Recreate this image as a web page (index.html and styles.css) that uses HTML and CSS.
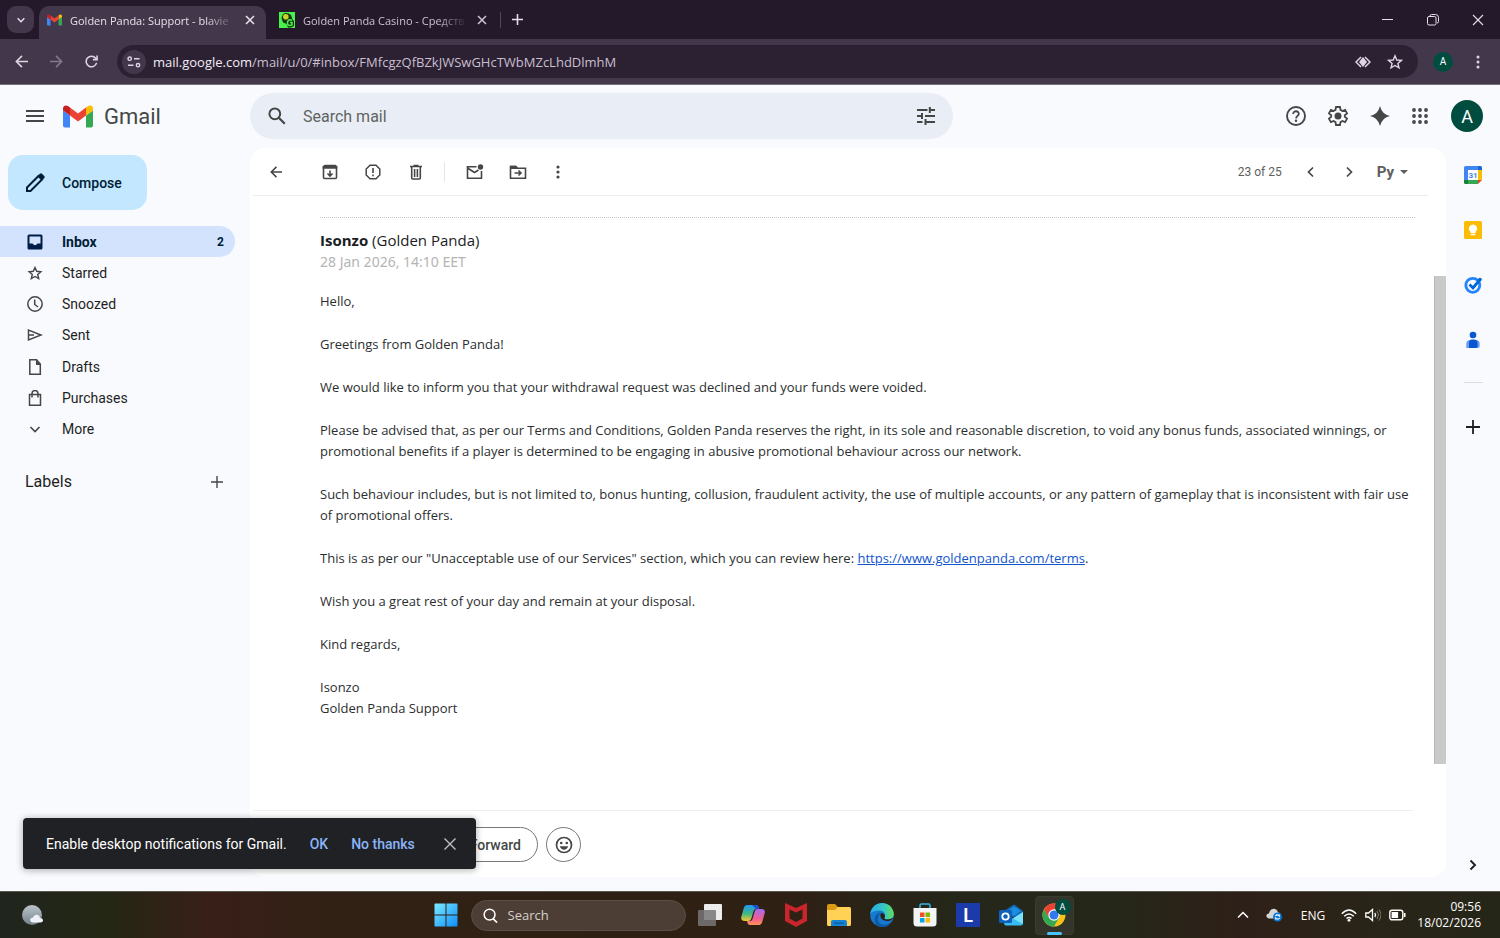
FILE: index.html
```html
<!DOCTYPE html>
<html lang="en">
<head>
<meta charset="utf-8">
<title>Golden Panda: Support</title>
<link rel="stylesheet" href="styles.css">
</head>
<body>
<div class="tabstrip">
  <button class="tab-search" aria-label="Search tabs"><svg viewBox="0 0 12 12" width="10" height="10"><path class="ln" d="M2 4l4 4 4-4" stroke-width="1.8"/></svg></button>
  <div class="tab active">
    <svg class="favicon" viewBox="0 0 30 22" width="15" height="12"><use href="#gm"/></svg>
    <span class="tab-title">Golden Panda: Support - blavie</span>
    <button class="plain" aria-label="Close tab"><svg viewBox="0 0 10 10" width="10" height="10"><path class="ln" d="M1 1l8 8M9 1l-8 8" stroke-width="1.6"/></svg></button>
  </div>
  <div class="tab">
    <svg class="favicon" viewBox="0 0 16 16" width="16" height="16"><path fill="#4af04e" d="M0 0h16v16H0z"/><path fill="#17350d" d="M4 2q4-2.500 8 1l1.500 4.500L15 9v5l-3 1.500H9L7.500 12 4 10.500 2.500 6z"/><circle cx="6.800" cy="4.800" r="2.800" fill="#c6d527"/><path fill="none" stroke="#4af04e" stroke-width="1.500" d="M13 8.500q-4-2-4.500 2t4.500 2.500v-2.500h-2"/></svg>
    <span class="tab-title">Golden Panda Casino - Средств</span>
    <button class="plain" aria-label="Close tab"><svg viewBox="0 0 10 10" width="10" height="10"><path class="ln" d="M1 1l8 8M9 1l-8 8" stroke-width="1.6"/></svg></button>
  </div>
  <span class="tab-divider"></span>
  <button class="plain new-tab" aria-label="New tab"><svg viewBox="0 0 12 12" width="11" height="11"><path class="ln" d="M6 0v12M0 6h12" stroke-width="1.7"/></svg></button>
  <div class="window-controls">
    <button class="plain" aria-label="Minimize"><svg viewBox="0 0 12 12" width="12" height="12"><path class="ln" d="M0 5.500h11" stroke-width="1"/></svg></button>
    <button class="plain" aria-label="Restore"><svg viewBox="0 0 12 12" width="12" height="12"><rect class="ln" x=".5" y="2.500" width="8.500" height="8.500" rx="1.500"/><path class="ln" d="M3 2q0-1.500 1.500-1.500h4q3 0 3 3v4q0 1.500-1.500 1.500"/></svg></button>
    <button class="plain" aria-label="Close"><svg viewBox="0 0 12 12" width="12" height="12"><path class="ln" d="M1 1l10 10M11 1L1 11" stroke-width="1.1"/></svg></button>
  </div>
</div>

<div class="navbar">
  <button class="plain nav-btn" aria-label="Back"><svg viewBox="0 0 14 14" width="13" height="13"><path class="ln" d="M14 7H2M7.500 1L1.500 7l6 6" stroke-width="1.7"/></svg></button>
  <button class="plain nav-btn dim" aria-label="Forward"><svg viewBox="0 0 14 14" width="13" height="13"><path class="ln" d="M0 7h12M6.500 1l6 6-6 6" stroke-width="1.7"/></svg></button>
  <button class="plain nav-btn" aria-label="Reload"><svg viewBox="0 0 14 14" width="13" height="13"><path class="ln" d="M12.500 8.500A5.700 5.700 0 1 1 11.500 3.500L13 5" stroke-width="1.7"/><path class="ln" d="M13 0.500V5H8.500" stroke-width="1.7"/></svg></button>
  <div class="omnibox">
    <button class="site-info" aria-label="Site information"><svg viewBox="0 0 14 12" width="14" height="12"><circle class="ln" cx="2.700" cy="2.700" r="1.700" stroke-width="1.400"/><circle class="ln" cx="11" cy="9.200" r="1.700" stroke-width="1.400"/><path class="ln" d="M7 2.700h5.500M1 9.200h5.500" stroke-width="1.500"/></svg></button>
    <span class="url"><b>mail.google.com</b>/mail/u/0/#inbox/FMfcgzQfBZkJWSwGHcTWbMZcLhdDlmhM</span>
    <button class="plain box-btn" aria-label="Lens"><svg viewBox="0 0 16 14" width="16" height="14"><path class="ln" d="M6 2L1 7l5 5M10 2l5 5-5 5" stroke-width="1.500"/><path fill="currentColor" d="M8 2l4 5-4 5-4-5z"/></svg></button>
    <button class="plain box-btn" aria-label="Bookmark"><svg viewBox="0 0 16 16" width="16" height="16"><path class="ln" d="M8 1.800l1.800 4.200 4.600.4-3.500 3 1.100 4.500L8 11.500l-4 2.400 1.100-4.500-3.500-3 4.600-.4z" stroke-width="1.400"/></svg></button>
  </div>
  <button class="mini-avatar" aria-label="Profile">A</button>
  <button class="plain menu-btn" aria-label="Menu"><svg viewBox="0 0 4 14" width="4" height="14"><g fill="currentColor"><circle cx="2" cy="2" r="1.500"/><circle cx="2" cy="7" r="1.500"/><circle cx="2" cy="12" r="1.500"/></g></svg></button>
</div>

<main class="app">
  <header class="header">
    <div class="brand">
      <button class="plain" aria-label="Main menu"><svg viewBox="0 0 18 14" width="18" height="14"><path class="ln" d="M0 2h18M0 7h18M0 12h18" stroke-width="1.800"/></svg></button>
      <svg class="logo" viewBox="0 0 30 22" width="30" height="23"><g id="gm"><path fill="#4285f4" d="M2 22h5V10L0 5v15q0 2 2 2z"/><path fill="#34a853" d="M23 22h5q2 0 2-2V5l-7 5z"/><path fill="#fbbc04" d="M23 2v8l7-5V3c0-2.800-3-4-5-2.400z"/><path fill="#ea4335" d="M7 10V2l8 6 8-6v8l-8 6z"/><path fill="#c5221f" d="M0 3v2l7 5V2L5 .6C3-1 0 .2 0 3z"/></g></svg>
      <span class="brand-name">Gmail</span>
    </div>
    <form class="search">
      <button type="button" class="plain" aria-label="Search"><svg viewBox="0 0 18 18" width="18" height="18"><circle class="ln" cx="6.800" cy="6.800" r="5.400" stroke-width="2"/><path class="ln" d="M10.800 10.800l6 6" stroke-width="2.200"/></svg></button>
      <input type="text" placeholder="Search mail" aria-label="Search mail">
      <button type="button" class="plain" aria-label="Search options"><svg viewBox="0 0 18 18" width="18" height="18"><path class="ln" d="M0 3h10.500M12.800 0v6M12.800 3H18M0 9h5M5 6v6M8 9h10M0 15h5.500M8.500 12v6M8.500 15H18" stroke-width="2"/></svg></button>
    </form>
    <div class="header-actions">
      <button class="plain" aria-label="Support"><svg viewBox="0 0 20 20" width="20" height="20"><circle class="ln" cx="10" cy="10" r="9" stroke-width="1.900"/><path class="ln" d="M7.200 8c0-3.800 5.800-3.500 5.600 0-.1 1.900-2.700 2-2.700 4.400" stroke-width="1.800"/><circle cx="10" cy="14.800" r="1.200" fill="currentColor"/></svg></button>
      <button class="plain" aria-label="Settings"><svg viewBox="2 2 20 20" width="20" height="20"><path class="ln" d="M10 3h4l.5 2.900 1.900 1.100 2.700-1.100 2 3.500-2.300 1.800v1.600l2.300 1.800-2 3.500-2.700-1.100-1.900 1.100L14 21h-4l-.5-2.900L7.600 17l-2.700 1.100-2-3.500 2.300-1.800v-1.600L2.900 9.400l2-3.500L7.600 7l1.900-1.100z" stroke-width="1.800"/><circle cx="12" cy="12" r="3.500" fill="currentColor"/></svg></button>
      <button class="plain" aria-label="Gemini"><svg viewBox="0 0 20 20" width="20" height="20"><path fill="currentColor" d="M10 0q1.800 8.200 10 10-8.200 1.800-10 10Q8.200 11.800 0 10q8.200-1.800 10-10z"/></svg></button>
      <button class="plain" aria-label="Google apps"><svg viewBox="0 0 16 16" width="16" height="16"><g fill="currentColor"><circle cx="2" cy="2" r="1.900"/><circle cx="8" cy="2" r="1.900"/><circle cx="14" cy="2" r="1.900"/><circle cx="2" cy="8" r="1.900"/><circle cx="8" cy="8" r="1.900"/><circle cx="14" cy="8" r="1.900"/><circle cx="2" cy="14" r="1.900"/><circle cx="8" cy="14" r="1.900"/><circle cx="14" cy="14" r="1.900"/></g></svg></button>
      <button class="avatar" aria-label="Account">A</button>
    </div>
  </header>

  <div class="columns">
    <aside class="sidebar">
      <button class="compose"><svg viewBox="0 0 20 20" width="20" height="20"><path class="ln" d="M2 18v-3.500L13.500 3l3.500 3.500L5.500 18z" stroke-width="2"/><path fill="currentColor" d="M12.500 3L15 .8q1-1 2 0L19.200 3q1 1 0 2L17 7.500z"/></svg>Compose</button>
      <nav class="folders">
        <a href="#inbox" class="folder current"><svg viewBox="0 0 16 16" width="16" height="16"><path fill="currentColor" fill-rule="evenodd" d="M2 .5h12q1.500 0 1.500 1.500v12q0 1.500-1.500 1.500H2Q.5 15.500.5 14V2Q.5.500 2 .5zM2.500 2.500v7h3q2.500 3.500 5 0h3v-7z"/></svg><span>Inbox</span><span class="count">2</span></a>
        <a href="#starred" class="folder"><svg viewBox="0 0 16 16" width="16" height="16"><path class="ln" d="M8 2.500l1.700 3.800 4.200.4-3.200 2.800 1 4.100L8 11.500l-3.700 2.100 1-4.100L2.100 6.700l4.200-.4z" stroke-width="1.400"/></svg><span>Starred</span></a>
        <a href="#snoozed" class="folder"><svg viewBox="0 0 16 16" width="16" height="16"><circle class="ln" cx="8" cy="8" r="7.200" stroke-width="1.500"/><path class="ln" d="M7.700 3.500v5l3.300 2.500" stroke-width="1.500"/></svg><span>Snoozed</span></a>
        <a href="#sent" class="folder"><svg viewBox="0 0 16 16" width="16" height="16"><path class="ln" d="M1.500 3v10L14 8zM1.500 8H7" stroke-width="1.500"/></svg><span>Sent</span></a>
        <a href="#drafts" class="folder"><svg viewBox="0 0 16 16" width="16" height="16"><path class="ln" d="M2.800.8h6.700L13.300 5v10.200H2.800z" stroke-width="1.500"/><path fill="currentColor" d="M9 .8V6h4.800z"/></svg><span>Drafts</span></a>
        <a href="#purchases" class="folder"><svg viewBox="0 0 16 16" width="16" height="16"><path class="ln" d="M2.500 4.500h11v10.700h-11zM5 7.500V3.500q0-3 3-3t3 3v4" stroke-width="1.500"/></svg><span>Purchases</span></a>
        <a href="#more" class="folder"><svg viewBox="0 0 16 16" width="16" height="16"><path class="ln" d="M3.500 6L8 10.500 12.500 6" stroke-width="1.600"/></svg><span>More</span></a>
      </nav>
      <div class="labels"><h2>Labels</h2><button class="plain" aria-label="Create label"><svg viewBox="0 0 12 12" width="12" height="12"><path class="ln" d="M6 0v12M0 6h12" stroke-width="1.400"/></svg></button></div>
    </aside>

    <section class="card">
      <div class="mail-tools">
        <button class="plain tool" aria-label="Back to inbox"><svg viewBox="0 0 14 14" width="12" height="12"><path class="ln" d="M14 7H2M7.500 1L1.500 7l6 6" stroke-width="1.800"/></svg></button>
        <div class="tool-group">
          <button class="plain tool" aria-label="Archive"><svg viewBox="0 0 16 16" width="16" height="16"><path class="ln" d="M1.500 2.500v11q0 1 1 1h11q1 0 1-1v-11zM8 6.500V12M5.500 9.500L8 12l2.500-2.500" stroke-width="1.600"/><path fill="currentColor" d="M2.500.8h11l1.800 2v2H.7v-2z"/></svg></button>
          <button class="plain tool" aria-label="Report spam"><svg viewBox="0 0 16 16" width="16" height="16"><path class="ln" d="M5 1.200h6L14.800 5v6L11 14.800H5L1.200 11V5z" stroke-width="1.500"/><path class="ln" d="M8 4v5M8 10.500v1.800" stroke-width="1.600"/></svg></button>
          <button class="plain tool" aria-label="Delete"><svg viewBox="0 0 14 16" width="14" height="16"><path class="ln" d="M1 2.500h12M4.500 1.500h5M2.700 3v11q0 1 1 1h6.600q1 0 1-1V3M5.600 5v8M8.400 5v8" stroke-width="1.600"/></svg></button>
        </div>
        <span class="tool-divider"></span>
        <div class="tool-group">
          <button class="plain tool" aria-label="Mark as unread"><svg viewBox="0 0 18 16" width="18" height="16"><path class="ln" d="M10.500 2.700H1.500v11.500h14V7M1.500 4l7 4.500 4-2.500" stroke-width="1.600"/><circle cx="14.500" cy="3" r="2.700" fill="currentColor"/></svg></button>
          <button class="plain tool" aria-label="Move to"><svg viewBox="0 0 18 16" width="18" height="16"><path class="ln" d="M1.500 3.500v10.700h15v-10H8.500L7 2.500H1.500zM5.500 9h6M9.500 6.500L12 9l-2.500 2.500" stroke-width="1.600"/><path fill="currentColor" d="M1 1.800h6L8.500 4v1H1z"/></svg></button>
          <button class="plain tool more" aria-label="More"><svg viewBox="0 0 4 14" width="4" height="14"><g fill="currentColor"><circle cx="2" cy="2" r="1.600"/><circle cx="2" cy="7" r="1.600"/><circle cx="2" cy="12" r="1.600"/></g></svg></button>
        </div>
        <span class="position">23 of 25</span>
        <button class="plain pager" aria-label="Newer"><svg viewBox="0 0 12 12" width="12" height="12"><path class="ln" d="M8 1.500L3.500 6 8 10.500" stroke-width="1.700"/></svg></button>
        <button class="plain pager" aria-label="Older"><svg viewBox="0 0 12 12" width="12" height="12"><path class="ln" d="M4 1.500L8.500 6 4 10.500" stroke-width="1.700"/></svg></button>
        <button class="plain lang">Ру<svg viewBox="0 0 8 4" width="8" height="4"><path fill="currentColor" d="M0 0h8L4 4z"/></svg></button>
      </div>

      <div class="scroll-area">
        <article class="message">
          <h3><b>Isonzo</b> (Golden Panda)</h3>
          <time>28 Jan 2026, 14:10 EET</time>
          <p>Hello,</p>
          <p>Greetings from Golden Panda!</p>
          <p>We would like to inform you that your withdrawal request was declined and your funds were voided.</p>
          <p>Please be advised that, as per our Terms and Conditions, Golden Panda reserves the right, in its sole and reasonable discretion, to void any bonus funds, associated winnings, or promotional benefits if a player is determined to be engaging in abusive promotional behaviour across our network.</p>
          <p>Such behaviour includes, but is not limited to, bonus hunting, collusion, fraudulent activity, the use of multiple accounts, or any pattern of gameplay that is inconsistent with fair use of promotional offers.</p>
          <p>This is as per our "Unacceptable use of our Services" section, which you can review here: <a href="#terms">https://www.goldenpanda.com/terms</a>.</p>
          <p>Wish you a great rest of your day and remain at your disposal.</p>
          <p>Kind regards,</p>
          <p>Isonzo<br>Golden Panda Support</p>
        </article>
        <div class="scrollbar"><div class="thumb"></div></div>
      </div>

      <div class="reply-row">
        <button class="pill" aria-label="Reply"></button>
        <button class="pill forward">Forward</button>
        <button class="emoji" aria-label="Add reaction"><svg viewBox="0 0 18 18" width="18" height="18"><circle class="ln" cx="9" cy="9" r="7.500" stroke-width="1.700"/><circle cx="6.200" cy="7" r="1.300" fill="currentColor"/><circle cx="11.800" cy="7" r="1.300" fill="currentColor"/><path fill="currentColor" d="M4.800 10.300h8.400q-1.200 3.400-4.200 3.400t-4.200-3.400z"/></svg></button>
      </div>
    </section>

    <aside class="side-panel">
      <button class="plain" aria-label="Calendar"><svg viewBox="0 0 18 18" width="18" height="18"><path fill="#4285f4" d="M1.500 0H14v4H4v10H0V1.500Q0 0 1.500 0z"/><path fill="#1967d2" d="M14 0h2.500Q18 0 18 1.500V4h-4z"/><path fill="#fbbc04" d="M14 4h4v10h-4z"/><path fill="#188038" d="M0 14h4v4H1.500Q0 18 0 16.500z"/><path fill="#34a853" d="M4 14h10v4H4z"/><path fill="#ea4335" d="M14 14h4l-4 4z"/><path fill="#fff" d="M4 4h10v10H4z"/><text x="9" y="12" text-anchor="middle" class="cal-num">31</text></svg></button>
      <button class="plain" aria-label="Keep"><svg viewBox="0 0 18 18" width="18" height="18"><rect width="18" height="18" rx="1.500" fill="#fbbc04"/><path fill="#fff" d="M9 3.500a4 4 0 0 1 2.500 7.200V12h-5v-1.300A4 4 0 0 1 9 3.500zM6.700 12.800h4.600v1.500H6.700z"/></svg></button>
      <button class="plain" aria-label="Tasks"><svg viewBox="0 0 18 18" width="18" height="18"><circle cx="8.800" cy="9.300" r="7" fill="none" stroke="#2684fc" stroke-width="2.800"/><path fill="none" stroke="#0066da" stroke-width="2.800" d="M5.500 8.500L9 12l7-8.500"/><circle cx="16" cy="3.500" r="1.800" fill="#0066da"/></svg></button>
      <button class="plain" aria-label="Contacts"><svg viewBox="0 0 18 18" width="18" height="18"><circle cx="9" cy="4" r="3.300" fill="#0b57d0"/><path fill="#6c9bf5" d="M2.300 17v-4q0-4 4-4h5.400q4 0 4 4v2q0 2-2 2z"/><path fill="#0b57d0" d="M5 17v-5q0-3.500 3-3.500h2q3.500 0 3.500 3.500v3.500q0 1.500-2 1.500z"/></svg></button>
      <span class="panel-divider"></span>
      <button class="plain" aria-label="Get add-ons"><svg viewBox="0 0 14 14" width="14" height="14"><path class="ln" d="M7 0v14M0 7h14" stroke-width="1.800"/></svg></button>
      <button class="plain collapse" aria-label="Hide side panel"><svg viewBox="0 0 12 12" width="12" height="12"><path class="ln" d="M3.500 1.500L8 6l-4.500 4.500" stroke-width="1.900"/></svg></button>
    </aside>
  </div>

  <div class="toast" role="alert">
    <span>Enable desktop notifications for Gmail.</span>
    <button class="plain toast-action">OK</button>
    <button class="plain toast-action">No thanks</button>
    <button class="plain" aria-label="Dismiss"><svg viewBox="0 0 12 12" width="12" height="12"><path class="ln" d="M.5.500l11 11M11.500.500l-11 11" stroke-width="1.400"/></svg></button>
  </div>
</main>

<footer class="taskbar">
  <button class="plain weather" aria-label="Weather"><svg viewBox="0 0 24 22" width="24" height="22"><defs><linearGradient id="moon" x2="0" y2="1"><stop stop-color="#bcc5cb"/><stop offset="1" stop-color="#74818b"/></linearGradient></defs><circle cx="11" cy="11" r="10" fill="url(#moon)"/><path fill="#eef2f7" d="M12 18.500c-4-.5-3.500-5 0-5 1.500-4 6.500-3.500 7 .5 4 0 4 4.500.5 4.500z"/></svg></button>
  <div class="dock">
    <button class="plain app-btn" aria-label="Start"><svg viewBox="0 0 24 24" width="24" height="24"><defs><linearGradient id="win" x2="1" y2="1"><stop stop-color="#7cebff"/><stop offset="1" stop-color="#0b8dfb"/></linearGradient></defs><path fill="url(#win)" d="M1.500.5h10v11H.5v-10q0-1 1-1zM12.500.5h10q1 0 1 1v10h-11zM.5 12.500h11v11h-10q-1 0-1-1zM12.500 12.500h11v10q0 1-1 1h-10z"/></svg></button>
    <label class="task-search"><svg viewBox="0 0 16 16" width="15" height="15"><circle class="ln" cx="7" cy="7" r="5.800" stroke-width="1.600"/><path class="ln" d="M11 11.500l4 4" stroke-width="1.800"/></svg><input type="text" placeholder="Search" aria-label="Search"></label>
    <button class="plain app-btn" aria-label="Task view"><svg viewBox="0 0 24 22" width="24" height="22"><rect x="6" width="18" height="16" rx="1" fill="#ececec"/><rect y="6" width="18" height="16" rx="1" fill="#777" opacity=".85"/></svg></button>
    <button class="plain app-btn" aria-label="Copilot"><svg viewBox="0 0 24 22" width="24" height="22"><defs><linearGradient id="cpa" x2="0" y2="1"><stop stop-color="#2196f3"/><stop offset=".55" stop-color="#41b883"/><stop offset="1" stop-color="#ffc82c"/></linearGradient><linearGradient id="cpb" x2="0" y2="1"><stop stop-color="#a66bf0"/><stop offset=".6" stop-color="#ee5d93"/><stop offset="1" stop-color="#ff9251"/></linearGradient></defs><path fill="url(#cpa)" d="M6 1h9q2 0 2.500 2L18 5h-3q-2 0-2.500 2l-2 7q-.8 3-3.500 3H4q-5 0-3.500-5l2-7Q3.500 1 6 1z"/><path fill="#1b4fd0" d="M11 1h4q2 0 2.500 2L18 5h-3z"/><path fill="url(#cpb)" d="M18 21H9q-2 0-2.500-2L6 17h3q2 0 2.500-2l2-7Q14 5 17 5h3q5 0 3.500 5l-2 7q-1 4-3.500 4z"/></svg></button>
    <button class="plain app-btn" aria-label="McAfee"><svg viewBox="0 0 22 24" width="22" height="24"><path fill="#c8252c" d="M0 0l11 5L22 0v18l-11 6-11-6zM4.500 6.500v9L11 19l6.500-3.500v-9L11 9.500z" fill-rule="evenodd"/></svg></button>
    <button class="plain app-btn" aria-label="File Explorer"><svg viewBox="0 0 24 22" width="24" height="22"><path fill="#d99a15" d="M0 2Q0 0 2 0h6l3 3v5H0z"/><path fill="#ffd154" d="M0 6h8l3-3h11.500Q24 3 24 4.500v16q0 1.500-1.500 1.500h-21Q0 22 0 20.500z"/><path fill="#1583d3" d="M4 22v-4q0-2 2-2h12q2 0 2 2v4z"/><path fill="#0d5fa5" d="M7 18.500h10v1.500H7z"/></svg></button>
    <button class="plain app-btn" aria-label="Edge"><svg viewBox="0 0 24 24" width="24" height="24"><defs><linearGradient id="eg"><stop stop-color="#2aa9e6"/><stop offset=".6" stop-color="#35c9c5"/><stop offset="1" stop-color="#65dc50"/></linearGradient></defs><circle cx="12" cy="12" r="11.800" fill="#1877cf"/><path fill="url(#eg)" d="M.3 11C2-3.500 22-3.500 23.800 10.500c.3 5-4.500 6.500-8.300 5.500-1.500-.5-1.200-1.500-.6-2.300C16 11 14 8 10.500 7.500 6.500 7 2 8.500.3 11z"/><path fill="#0c59a4" d="M9 12c-4 9 5 13 12 7-7 12-20 3-15.500-6Q7 10 10.500 9.500 9.500 10.500 9 12z"/><path fill="#29220f" d="M15 13.500q-1.500 2 .5 2.700 4 1 7.500-1.500-1 3-5 3.300c-6 .3-9-4-7-8q3.500 0 4 3.500z"/></svg></button>
    <button class="plain app-btn" aria-label="Store"><svg viewBox="0 0 24 24" width="24" height="24"><path fill="none" stroke="#35b2e5" stroke-width="1.600" d="M7 6V2.500Q7 1 8.500 1h7Q17 1 17 2.500V6"/><path fill="#f4f4f4" d="M.5 5h23v15q0 3.500-3.500 3.500H4Q.5 23.500.5 20z"/><path fill="#f25022" d="M7 9.500h4.500V14H7z"/><path fill="#7fba00" d="M12.500 9.500H17V14h-4.500z"/><path fill="#00a4ef" d="M7 15h4.500v4.500H7z"/><path fill="#ffb900" d="M12.500 15H17v4.500h-4.500z"/></svg></button>
    <button class="plain app-btn" aria-label="Lenovo"><span class="l-tile">L</span></button>
    <button class="plain app-btn" aria-label="Outlook"><svg viewBox="0 0 24 22" width="24" height="22"><path fill="#1066b5" d="M5 7l9-6q1-.7 2 0l8 6v4L5 15z"/><path fill="#1b8ee0" d="M8 7l7-4.500L22 7l-7 5z"/><path fill="#38bdf2" d="M24 8v11q0 2.500-2.500 2.500H7q-2 0-2-2z"/><path fill="#79e1fa" d="M24 8v12L14 14.500z"/><rect y="6" width="13" height="13" rx="1.500" fill="#0d61bd"/><circle cx="6.500" cy="12.500" r="3.200" fill="none" stroke="#fff" stroke-width="1.800"/></svg></button>
    <button class="plain app-btn running" aria-label="Chrome"><svg viewBox="0 0 24 24" width="24" height="24"><circle cx="12" cy="12" r="11.500" fill="#fbc116"/><path fill="#ea4335" d="M2 6.300A11.500 11.500 0 0 1 22 6.300H12v5.700l-5 3z"/><path fill="#34a853" d="M2 6.300A11.500 11.500 0 0 0 12 23.500l5-8.700-5-2.800-5 3z"/><circle cx="12" cy="12" r="5.700" fill="#fff"/><circle cx="12" cy="12" r="4.500" fill="#3179ee"/></svg><span class="badge">A</span></button>
  </div>
  <div class="tray">
    <button class="plain" aria-label="Show hidden icons"><svg viewBox="0 0 12 12" width="12" height="12"><path class="ln" d="M1 8.500l5-5 5 5" stroke-width="1.500"/></svg></button>
    <button class="plain cloud" aria-label="OneDrive"><svg viewBox="0 0 16 14" width="16" height="14"><path fill="#d5d5d5" d="M3 10.500C-.5 10-.5 5.500 3 5.500 4-.5 11-.5 12 4.500c3.500 0 4 5 1 6z"/><circle cx="11.500" cy="9" r="4.500" fill="#0a78d6"/><path fill="none" stroke="#fff" stroke-width="1.100" d="M9.300 8q2-2.300 4 0V6.500M13.700 10q-2 2.300-4 0v1.500"/></svg></button>
    <span class="lang-code">ENG</span>
    <button class="plain quick" aria-label="Network, sound, battery">
      <svg viewBox="0 0 16 13" width="16" height="13"><path class="ln" d="M.8 4.800q7.200-7.500 14.400 0M3.200 7.300q4.800-4.800 9.600 0M5.500 9.600q2.500-2.300 5 0" stroke-width="1.400"/><circle cx="8" cy="11.300" r="1.400" fill="currentColor"/></svg>
      <svg viewBox="0 0 16 14" width="16" height="14"><path class="ln" d="M.8 5v4h2.700L7.500 12.500v-11L3.500 5zM9.800 5q1.500 2 0 4" stroke-width="1.300"/><path class="ln" opacity=".4" d="M12 3q3 4 0 8M14 1.500q4 5.500 0 11"/></svg>
      <svg viewBox="0 0 17 12" width="17" height="12"><rect class="ln" x=".8" y="1.200" width="13" height="9.600" rx="2.200" stroke-width="1.400"/><rect x="2.600" y="3" width="6.500" height="6" fill="currentColor"/><path class="ln" d="M15.700 4v4" stroke-width="1.600"/></svg>
    </button>
    <div class="clock"><span>09:56</span><span>18/02/2026</span></div>
  </div>
</footer>
</body>
</html>
```

FILE: styles.css
```css
* { box-sizing: border-box; }

body {
  margin: 0;
  height: 100vh;
  display: flex;
  flex-direction: column;
  overflow: hidden;
  font-family: Roboto, sans-serif;
  font-size: 14px;
  color: #1f1f1f;
}

svg { display: block; flex: none; }
.ln { fill: none; stroke: currentColor; }

button, input { font: inherit; color: inherit; }
.plain {
  border: 0;
  padding: 0;
  background: none;
  display: flex;
  align-items: center;
  justify-content: center;
}

/* Browser tabs */
.tabstrip {
  height: 39px;
  flex: none;
  display: flex;
  align-items: center;
  padding-left: 7px;
  background: #23192b;
  color: #e6dfe9;
  font-family: "Open Sans", sans-serif;
  font-size: 11px;
}
.tab-search {
  width: 27px;
  height: 27px;
  display: flex;
  align-items: center;
  justify-content: center;
  border: 0;
  border-radius: 9px;
  background: #43384b;
  margin-right: 5px;
}
.tab {
  width: 227px;
  height: 33px;
  align-self: flex-end;
  display: flex;
  align-items: center;
  padding: 0 11px 5px 8px;
  color: #cbc1d0;
}
.tab + .tab { padding: 0 6px 5px 13px; }
.tab.active {
  background: #43384b;
  border-radius: 10px 10px 0 0;
  color: #e6dfe9;
}
.favicon { margin-right: 8px; }
.tab-title {
  flex: 1;
  white-space: nowrap;
  margin-right: 10px;
  mask-image: linear-gradient(90deg, #000 82%, transparent);
}
.tab-divider { width: 1px; height: 16px; background: #51465a; margin: 0 11px 0 7px; }
.window-controls { margin-left: auto; display: flex; gap: 33px; padding-right: 16px; }

/* Address row */
.navbar {
  height: 46px;
  flex: none;
  display: flex;
  align-items: center;
  padding: 0 20px 0 15px;
  background: #43384b;
  border-bottom: 1px solid #77707d;
  color: #dfd3e4;
}
.nav-btn { width: 13px; margin-right: 22px; }
.dim { color: #85798d; }
.omnibox {
  flex: 1;
  height: 33px;
  display: flex;
  align-items: center;
  padding: 0 15px 0 5px;
  border-radius: 17px;
  background: #2b2133;
  margin-right: 15px;
  margin-left: -3px;
}
.site-info {
  width: 24px;
  height: 24px;
  padding: 0;
  border: 0;
  border-radius: 12px;
  background: #43384b;
  display: flex;
  align-items: center;
  justify-content: center;
  margin-right: 7px;
}
.url { flex: 1; font-family: "Open Sans", sans-serif; font-size: 13px; color: #c9bfce; }
.url b { font-weight: 400; color: #f2ecf5; }
.box-btn { margin-left: 16px; }
.mini-avatar, .avatar {
  border: 0;
  padding: 0;
  border-radius: 50%;
  background: #004d40;
  color: #fff;
}
.mini-avatar { width: 20px; height: 20px; font-size: 10px; }
.menu-btn { margin-left: 23px; }

/* Mail application */
.app {
  flex: 1;
  min-height: 0;
  display: flex;
  flex-direction: column;
  position: relative;
  background: #f8fafd;
}
.header {
  height: 63px;
  flex: none;
  display: flex;
  align-items: center;
  padding: 0 17px 1px 0;
  color: #444746;
}
.brand { width: 250px; display: flex; align-items: center; padding-left: 26px; }
.logo { margin: 0 11px 0 19px; }
.brand-name { font-size: 22px; }
.search {
  width: 703px;
  height: 46px;
  display: flex;
  align-items: center;
  gap: 17px;
  padding: 0 18px;
  border-radius: 23px;
  background: #e9eef6;
}
.search input {
  flex: 1;
  border: 0;
  padding: 0;
  background: none;
  font-size: 16px;
  outline: 0;
}
.search input::placeholder { color: #5f6362; }
.header-actions { margin-left: auto; display: flex; align-items: center; gap: 22px; }
.header-actions .avatar { margin-left: 1px; }
.avatar { width: 32px; height: 32px; font-size: 18px; }

.columns { flex: 1; min-height: 0; display: flex; padding-bottom: 14px; }

.sidebar { width: 250px; padding: 7px 15px 0 0; }
.compose {
  width: 139px;
  height: 55px;
  display: flex;
  align-items: center;
  gap: 17px;
  margin-left: 8px;
  padding: 0 0 0 17px;
  border: 0;
  border-radius: 15px;
  background: #c2e7ff;
  color: #001d35;
  font-weight: 500;
}
.folders { height: 219px; margin-top: 16px; display: grid; grid-auto-rows: 1fr; }
.folder {
  display: flex;
  align-items: center;
  gap: 19px;
  padding: 0 11px 0 27px;
  border-radius: 0 16px 16px 0;
  color: #1f1f1f;
  text-decoration: none;
}
.folder svg { color: #444746; }
.folder.current { background: #d3e3fd; color: #001d35; font-weight: 700; }
.folder.current svg { color: #001d49; }
.count { margin-left: auto; font-size: 12px; }
.labels { display: flex; align-items: center; justify-content: space-between; margin: 26px 12px 0 25px; color: #444746; }
.labels h2 { margin: 0; font-size: 16px; font-weight: 400; line-height: 22px; color: #1f1f1f; }

.card {
  flex: 1;
  min-width: 0;
  display: flex;
  flex-direction: column;
  overflow: hidden;
  border-radius: 15px;
  background: #fff;
}
.mail-tools {
  height: 48px;
  flex: none;
  display: flex;
  align-items: center;
  margin: 0 18px 0 3px;
  padding: 0 20px 0 11px;
  border-bottom: 1px solid #eceeef;
  color: #444746;
}
.tool { width: 23px; height: 24px; }
.tool-group { display: flex; gap: 20px; margin-left: 31px; }
.tool-divider { width: 1px; height: 20px; background: #e4e6e8; margin: 0 -13px 0 17px; }
.tool.more { margin-left: -3px; }
.position { margin-left: auto; font-size: 12px; color: #5e5e5e; }
.pager { margin-left: 26px; }
.position + .pager { margin-left: 23px; }
.lang { margin-left: 22px; gap: 6px; font-weight: 700; font-size: 15px; color: #5e5e5e; }

.scroll-area { flex: 1; min-height: 0; display: flex; }
.message {
  flex: 1;
  margin: 21px 19px 0 70px;
  border-top: 1px dotted #c5c5c5;
  padding-top: 11px;
  font-family: "Open Sans", sans-serif;
  font-size: 13px;
  color: #2b2e2f;
}
.message h3 { margin: 0; font-size: 15px; font-weight: 400; line-height: 22px; color: #1b1d1e; }
.message time { display: block; margin-bottom: 18px; font-family: "Noto Sans", sans-serif; font-size: 14px; line-height: 22px; color: #b4b4b4; }
.message p { margin: 0 0 22px; line-height: 21px; }
.message a { color: #1155cc; }
.scrollbar { width: 12px; padding-top: 80px; }
.thumb { height: 488px; max-height: 100%; background: #c9c9c9; border-left: 1px solid #b9b9b9; }

.reply-row {
  flex: none;
  display: flex;
  gap: 8px;
  margin: 0 33px 0 3px;
  padding: 16px 0 15px 67px;
  border-top: 1px solid #eceeef;
  color: #444746;
}
.pill, .emoji { height: 35px; padding: 0; border: 1px solid #747775; border-radius: 18px; background: #fff; }
.pill { width: 92px; font-weight: 500; }
.pill.forward { width: 118px; padding-right: 16px; text-align: right; }
.emoji { width: 35px; display: flex; align-items: center; justify-content: center; }

.side-panel {
  width: 54px;
  display: flex;
  flex-direction: column;
  align-items: center;
  gap: 37px;
  padding: 18px 0 6px;
}
.cal-num { font: 700 8px Roboto, sans-serif; fill: #4285f4; }
.panel-divider { width: 19px; height: 1px; margin: -4px 0 0; background: #dadce0; }
.collapse { margin-top: auto; }

.toast {
  position: absolute;
  left: 23px;
  bottom: 22px;
  height: 51px;
  display: flex;
  align-items: center;
  padding: 0 20px 0 23px;
  border-radius: 4px;
  background: #202124;
  color: #fff;
  box-shadow: 0 1px 6px 1px rgba(60, 64, 67, .35);
}
.toast-action { margin-left: 23px; color: #8ab4f8; font-weight: 500; }
.toast-action + .plain:last-child { margin-left: 29px; color: #bdc1c6; }

/* Desktop taskbar */
.taskbar {
  height: 47px;
  flex: none;
  display: grid;
  grid-template-columns: 1fr auto 1fr;
  align-items: center;
  border-top: 1px solid #5c5850;
  background: linear-gradient(90deg, #20251e, #242714 7%, #391f18 14%, #312115 22%, #2f2014 52%, #242719 64%, #252719 74%, #2e2018 83%, #292518 92%, #252618);
  color: #fff;
  font-family: "Open Sans", sans-serif;
}
.weather { margin-left: 21px; justify-self: start; }
.dock { display: flex; align-items: center; }
.app-btn { width: 43px; height: 39px; position: relative; }
.task-search {
  width: 215px;
  height: 31px;
  display: flex;
  align-items: center;
  gap: 10px;
  margin: 0 3px;
  padding: 0 11px;
  border: 1px solid #5c4e45;
  border-radius: 16px;
  background: #4c3e35;
}
.task-search input { width: 100%; padding: 0; border: 0; outline: 0; background: none; font-size: 13px; }
.task-search input::placeholder { color: #d5cfcb; }
.l-tile { width: 24px; height: 24px; background: #1b3bab; font: 700 19px/24px Lato, sans-serif; }
.running::before {
  content: "";
  position: absolute;
  inset: 0 2px;
  border: 1px solid #3b3c30;
  border-radius: 4px;
  background: #34352a;
}
.running svg { position: relative; }
.running::after {
  content: "";
  position: absolute;
  left: 14px;
  right: 14px;
  bottom: 0;
  height: 3px;
  border-radius: 2px;
  background: #4cc2ff;
}
.badge {
  position: absolute;
  top: 3px;
  right: 5px;
  width: 16px;
  height: 16px;
  border-radius: 50%;
  background: #004d40;
  font: 9px/16px Roboto, sans-serif;
}
.tray { display: flex; align-items: center; justify-content: flex-end; padding-right: 19px; }
.cloud { margin: 0 19px 0 17px; }
.lang-code { font-size: 12px; }
.quick { gap: 8px; margin: 0 11px 0 16px; }
.clock { display: flex; flex-direction: column; align-items: flex-end; font-size: 12px; line-height: 16px; }
```
